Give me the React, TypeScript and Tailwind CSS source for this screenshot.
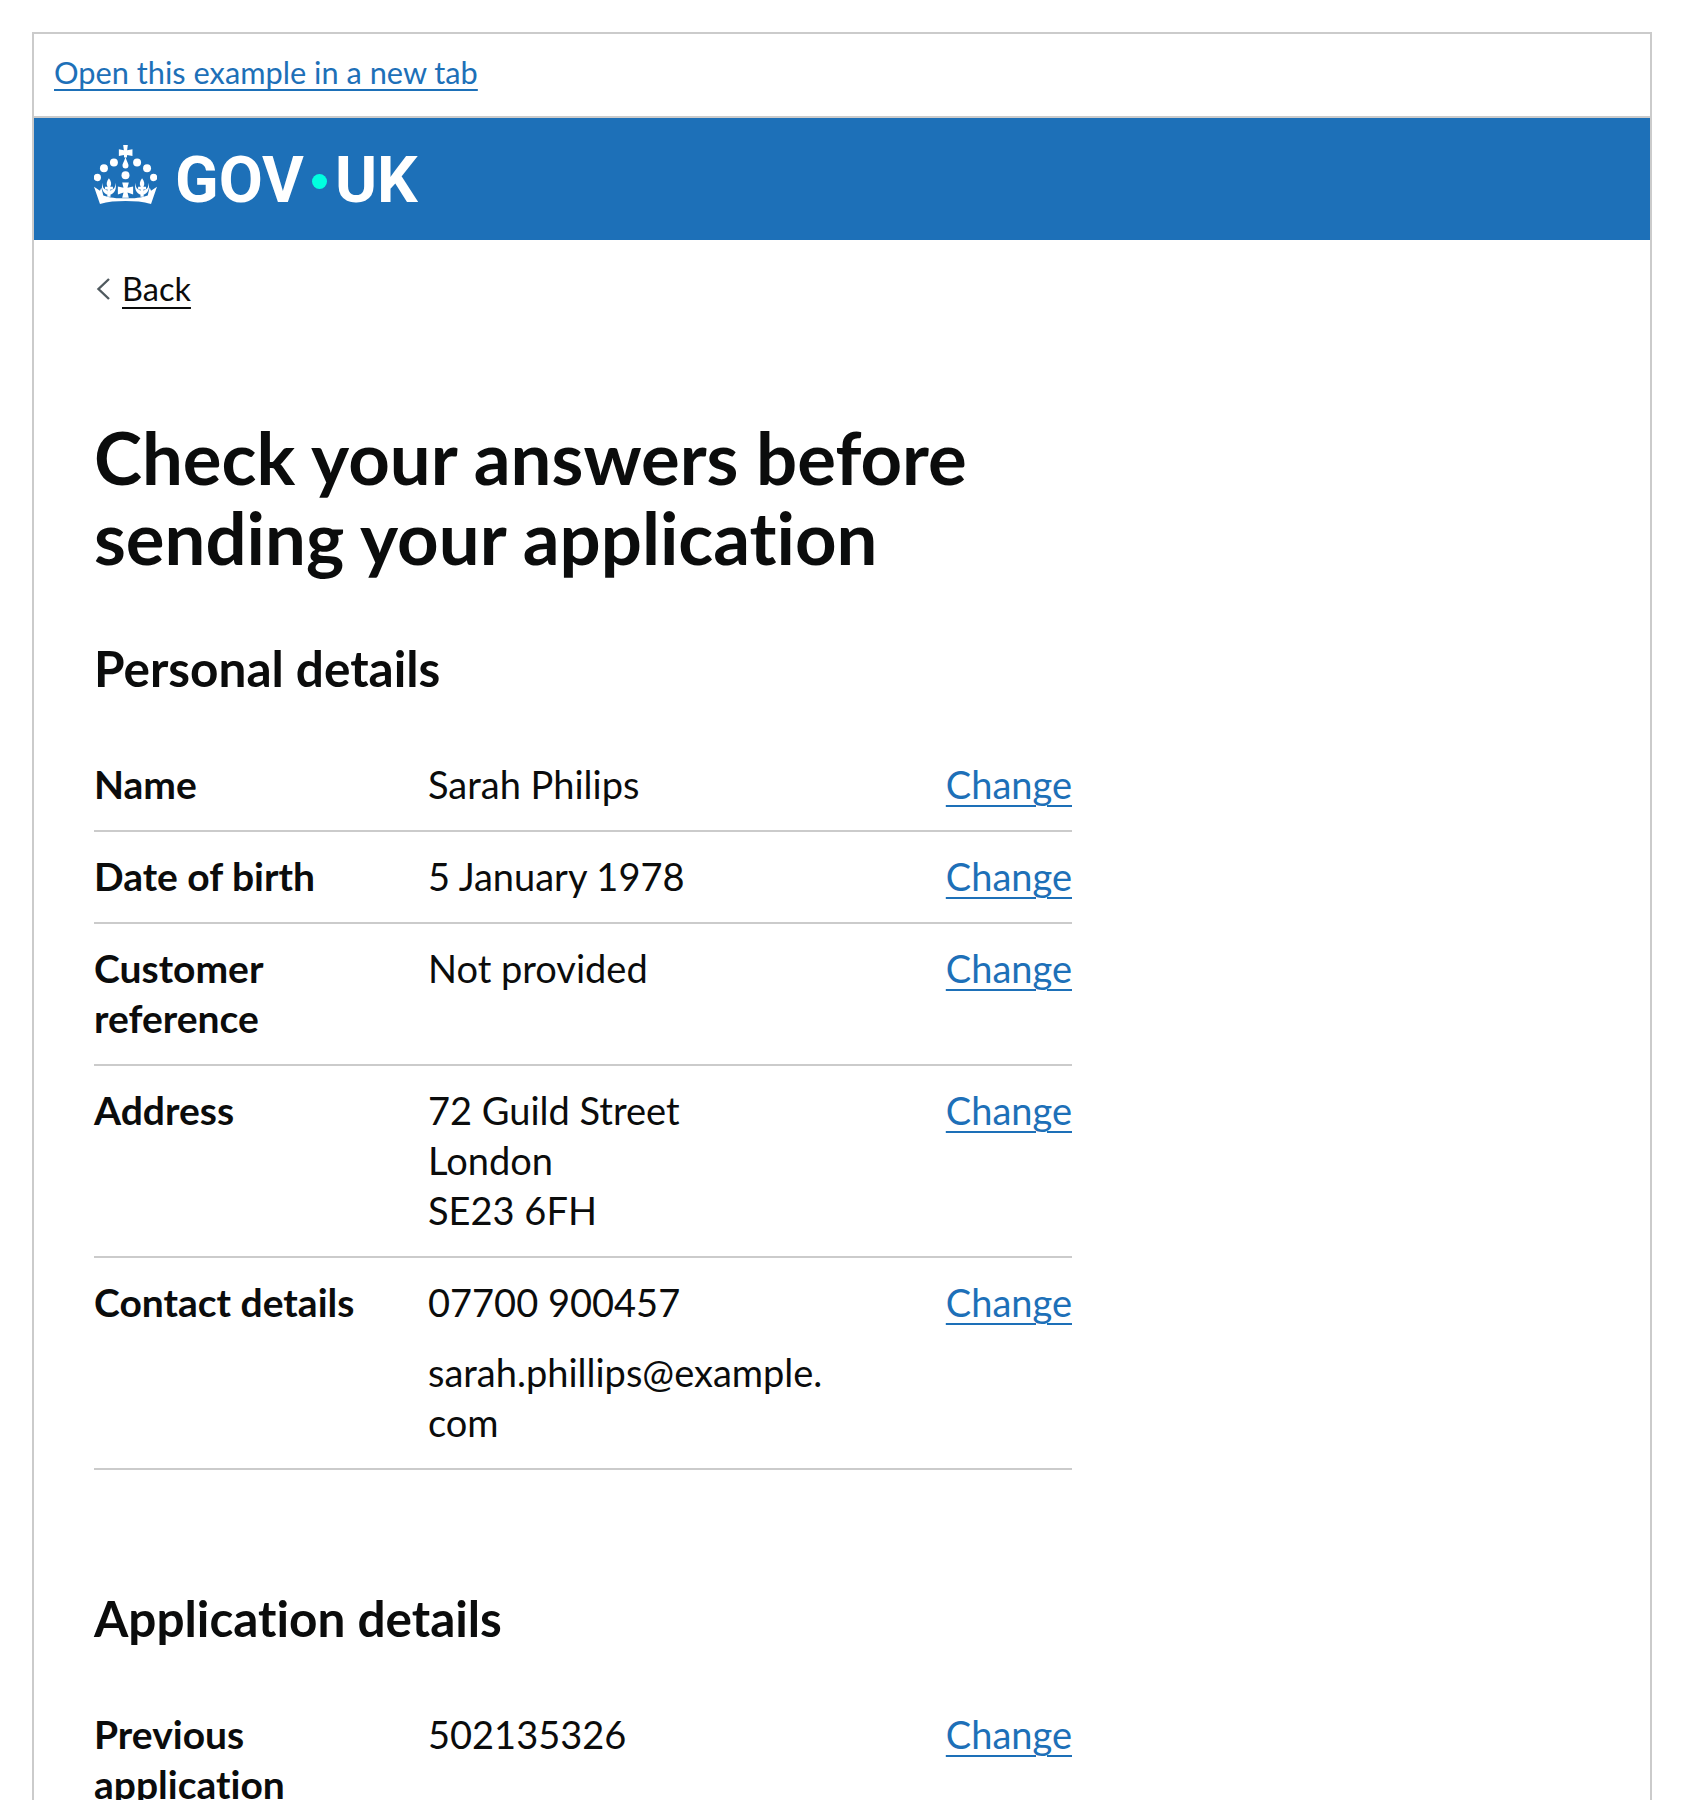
const font = "font-['Lato','Liberation_Sans',sans-serif]"

function Crown() {
  return (
    <svg viewBox="42 42 190 178" className="w-[63px] h-[59px] shrink-0 mb-[10px]" fill="#fff">
      {/* cross and orb */}
      <path d="M130 42L144 42L142 58L158 55L158 75L142 72L141 80L133 80L132 72L117 75L117 55L132 58Z" />
      <path d="M137 78C141 92 146 98 146 104A9 9 0 0 1 128 104C128 98 133 92 137 78Z" />
      {/* pearls */}
      <circle cx="102" cy="95" r="12" />
      <circle cx="172" cy="95" r="12" />
      <circle cx="72" cy="112" r="12" />
      <circle cx="202" cy="112" r="12" />
      <circle cx="52" cy="140" r="11" />
      <circle cx="222" cy="140" r="11" />
      <circle cx="137" cy="133" r="12" />
      {/* fleurs */}
      <path d="M87 142C94 152 96 160 91 168L99 168L99 176L91 176L92 198L82 198L83 176L75 176L75 168L83 168C78 160 80 152 87 142Z" />
      <path d="M187 142C194 152 196 160 191 168L199 168L199 176L191 176L192 198L182 198L183 176L175 176L175 168L183 168C178 160 180 152 187 142Z" />
      <path d="M68 156C66 170 74 178 84 180L84 192C70 190 62 172 68 156Z" />
      <path d="M106 156C108 170 100 178 90 180L90 192C104 190 112 172 106 156Z" />
      <path d="M168 156C166 170 174 178 184 180L184 192C170 190 162 172 168 156Z" />
      <path d="M206 156C208 170 200 178 190 180L190 192C204 190 212 172 206 156Z" />
      <path d="M127 155L147 155L143 171L160 167L160 191L143 185L147 201L127 201L131 185L114 191L114 167L131 171Z" />
      {/* band */}
      <path d="M42 168L60 180L64 170L70 194C90 201 110 203 137 203C164 203 184 201 204 194L210 170L214 180L232 168L214 220C190 213 165 211 137 211C109 211 84 213 60 220Z" />
    </svg>
  )
}

function Row({ label, children }: { label: React.ReactNode; children: React.ReactNode }) {
  return (
    <div className="flex border-b-2 border-[#cbcbcb] pt-[19px] pb-[21px] text-[38px] leading-[50px] text-[#0b0c0c]">
      <div className="w-[334px] shrink-0 pr-6 text-[39px] font-bold">{label}</div>
      <div className="flex-1 pr-10">{children}</div>
      <a href="#" className="text-[#1d70b8] underline decoration-2 underline-offset-[6px] h-[50px]">Change</a>
    </div>
  )
}

export default function App() {
  return (
    <div className={`h-[1800px] overflow-hidden bg-white [font-variant-ligatures:none] ${font}`}>
      <div className="mx-8 mt-8 h-[1800px] border-2 border-[#cbcbcb]">
        <div className="h-[84px] pt-[19px] px-5 border-b-2 border-[#cbcbcb] text-[30.75px] leading-10">
          <a href="#" className="text-[#1d70b8] underline decoration-2 underline-offset-[5px]">Open this example in a new tab</a>
        </div>

        <header className="h-[122px] bg-[#1d70b8] pl-[60px] flex items-center text-white">
          <Crown />
          <div className="ml-[18px] pt-[4px] flex items-center font-['Roboto',sans-serif] font-bold text-[64px] leading-none">
            <span>GOV</span>
            <span className="w-[15px] h-[15px] rounded-full bg-[#00ffe0] mx-2" />
            <span>UK</span>
          </div>
        </header>

        <div className="px-[60px]">
          <div className="mt-[29px] flex items-center h-10 text-[32.5px] leading-10 text-[#0b0c0c]">
            <svg viewBox="0 0 14 22" className="w-[14px] h-[22px] mr-3 ml-[2px]" fill="none" stroke="#505a5f" strokeWidth="2.4">
              <path d="M13 1L2.5 11L13 21" />
            </svg>
            <a href="#" className="underline decoration-2 underline-offset-[6px]">Back</a>
          </div>

          <h1 className="mt-[108px] text-[72.5px] leading-[80px] font-bold text-[#0b0c0c]">
            Check your answers before<br />sending your application
          </h1>

          <h2 className="mt-[61px] mb-[42px] text-[49.5px] leading-[60px] font-bold text-[#0b0c0c]">Personal details</h2>

          <div className="w-[978px]">
            <Row label="Name">Sarah Philips</Row>
            <Row label="Date of birth">5 January 1978</Row>
            <Row label={<>Customer<br />reference</>}>Not provided</Row>
            <Row label="Address">72 Guild Street<br />London<br />SE23 6FH</Row>
            <Row label="Contact details">
              <p className="mb-5">07700 900457</p>
              <p>sarah.phillips@example.<br />com</p>
            </Row>
          </div>

          <h2 className="mt-[118px] mb-[42px] text-[49.5px] leading-[60px] font-bold text-[#0b0c0c]">Application details</h2>

          <div className="w-[978px]">
            <Row label={<>Previous<br />application</>}>502135326</Row>
          </div>
        </div>
      </div>
    </div>
  )
}
